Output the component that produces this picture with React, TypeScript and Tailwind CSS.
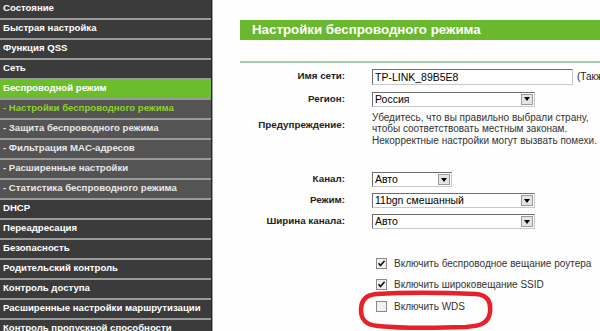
import React from 'react';

const font = { fontFamily: '"Liberation Sans", Arial, sans-serif' };

type Item = { label: string; kind: 'main' | 'sub' | 'active' | 'subActive' };

const menu: Item[] = [
  { label: 'Состояние', kind: 'main' },
  { label: 'Быстрая настройка', kind: 'main' },
  { label: 'Функция QSS', kind: 'main' },
  { label: 'Сеть', kind: 'main' },
  { label: 'Беспроводной режим', kind: 'active' },
  { label: '- Настройки беспроводного режима', kind: 'subActive' },
  { label: '- Защита беспроводного режима', kind: 'sub' },
  { label: '- Фильтрация MAC-адресов', kind: 'sub' },
  { label: '- Расширенные настройки', kind: 'sub' },
  { label: '- Статистика беспроводного режима', kind: 'sub' },
  { label: 'DHCP', kind: 'main' },
  { label: 'Переадресация', kind: 'main' },
  { label: 'Безопасность', kind: 'main' },
  { label: 'Родительский контроль', kind: 'main' },
  { label: 'Контроль доступа', kind: 'main' },
  { label: 'Расширенные настройки маршрутизации', kind: 'main' },
  { label: 'Контроль пропускной способности', kind: 'main' },
];

function MenuRow({ item }: { item: Item }) {
  const cls =
    item.kind === 'active'
      ? 'bg-[#6cbd2c] text-white'
      : item.kind === 'subActive'
      ? 'bg-[#545454] text-[#8fd12e]'
      : item.kind === 'sub'
      ? 'bg-[#545454] text-[#e8e8e8]'
      : 'bg-[#3b3b3b] text-white';
  return (
    <div
      className={`h-[20px] shrink-0 border-b-2 border-[#9a9a9a] pl-[3px] text-[9.6px] font-bold leading-[16px] whitespace-nowrap ${cls}`}
    >
      {item.label}
    </div>
  );
}

function SelectBox({ value, width }: { value: string; width: string }) {
  return (
    <div
      className={`flex h-[15px] items-stretch border border-t-[#6f6f6f] border-l-[#6f6f6f] border-r-[#c8c8c8] border-b-[#c8c8c8] bg-white ${width}`}
    >
      <div className="flex-1 pl-[2px] text-[10.5px] leading-[13px] text-black">{value}</div>
      <div className="m-[1px] flex w-[12px] items-center justify-center border border-[#9a9a9a] bg-[#e4e4e4]">
        <svg width="6" height="4" viewBox="0 0 6 4">
          <path d="M0 0 H6 L3 4 Z" fill="#000" />
        </svg>
      </div>
    </div>
  );
}

function Check({ checked }: { checked: boolean }) {
  return (
    <svg width="11" height="11" viewBox="0 0 11 11" className="shrink-0">
      <rect x="0.5" y="0.5" width="10" height="10" fill="#f1f1f1" stroke="#8a8a8a" />
      {checked && <path d="M2.5 5.2 L4.5 7.5 L8.6 2.8" fill="none" stroke="#111" strokeWidth="1.6" />}
    </svg>
  );
}

function Label({ children, className = '' }: { children: React.ReactNode; className?: string }) {
  return (
    <div className={`text-right text-[9.8px] font-bold text-[#222] whitespace-nowrap ${className}`}>{children}</div>
  );
}

export default function App() {
  return (
    <div className="flex h-[331px] w-[600px] overflow-hidden bg-[#fefefe]" style={font}>
      <div className="flex w-[211px] shrink-0 flex-col bg-[#3b3b3b]">
        {menu.map((m) => (
          <MenuRow key={m.label} item={m} />
        ))}
      </div>
      <div className="w-px shrink-0 bg-[#262626]" />
      <div className="w-px shrink-0 bg-[#a0a0a0]" />

      <div className="relative flex-1 pl-[27px] pt-[20px]">
        <div className="h-[20px] bg-[#69b82e] pl-[12px] text-[13.3px] font-bold leading-[20px] text-white whitespace-nowrap">
          Настройки беспроводного режима
        </div>
        <div className="mt-[21px] h-[1.5px] bg-[#a9cdb2]" />

        <div className="mt-[6px] grid grid-cols-[105px_1fr] items-center gap-x-[27px] text-[10px] text-[#222]">
          <Label>Имя сети:</Label>
          <div className="flex items-center whitespace-nowrap">
            <div className="h-[16px] w-[201px] border border-t-[#6f6f6f] border-l-[#6f6f6f] border-r-[#c8c8c8] border-b-[#c8c8c8] bg-white pl-[2px] text-[10.5px] leading-[14px] text-black">
              TP-LINK_89B5E8
            </div>
            <span className="ml-[4px]">(Также называется SSID)</span>
          </div>

          <Label className="mt-[7px]">Регион:</Label>
          <div className="mt-[7px]">
            <SelectBox value="Россия" width="w-[163px]" />
          </div>

          <Label className="mt-[5px] self-start pt-[6px]">Предупреждение:</Label>
          <div className="mt-[5px] leading-[11.6px] text-[#333] whitespace-nowrap">
            Убедитесь, что вы правильно выбрали страну,
            <br />
            чтобы соответствовать местным законам.
            <br />
            Некорректные настройки могут вызвать помехи.
          </div>

          <Label className="mt-[26px]">Канал:</Label>
          <div className="mt-[26px]">
            <SelectBox value="Авто" width="w-[80px]" />
          </div>

          <Label className="mt-[6px]">Режим:</Label>
          <div className="mt-[6px]">
            <SelectBox value="11bgn смешанный" width="w-[163px]" />
          </div>

          <Label className="mt-[6px]">Ширина канала:</Label>
          <div className="mt-[6px]">
            <SelectBox value="Авто" width="w-[163px]" />
          </div>

          <div />
          <div className="mt-[29px] flex flex-col gap-[10px] pl-[4px] text-[#333]">
            <div className="flex h-[11px] items-center gap-[7px] whitespace-nowrap">
              <Check checked />
              <span>Включить беспроводное вещание роутера</span>
            </div>
            <div className="flex h-[11px] items-center gap-[7px] whitespace-nowrap">
              <Check checked />
              <span>Включить широковещание SSID</span>
            </div>
            <div className="mt-[1px] flex h-[11px] items-center gap-[7px] whitespace-nowrap">
              <Check checked={false} />
              <span>Включить WDS</span>
            </div>
          </div>
        </div>

        <svg className="absolute left-[145px] top-[290px]" width="136" height="42" viewBox="0 0 136 42">
          <path
            d="M18 4 C50 2 95 3 118 4 C130 5 133 12 132 22 C131 32 124 36 108 37 C80 38 40 38 20 36 C8 35 3 30 3 20 C3 10 8 5 18 4 Z"
            fill="none"
            stroke="#e8202a"
            strokeWidth="4.5"
          />
        </svg>
      </div>
    </div>
  );
}
